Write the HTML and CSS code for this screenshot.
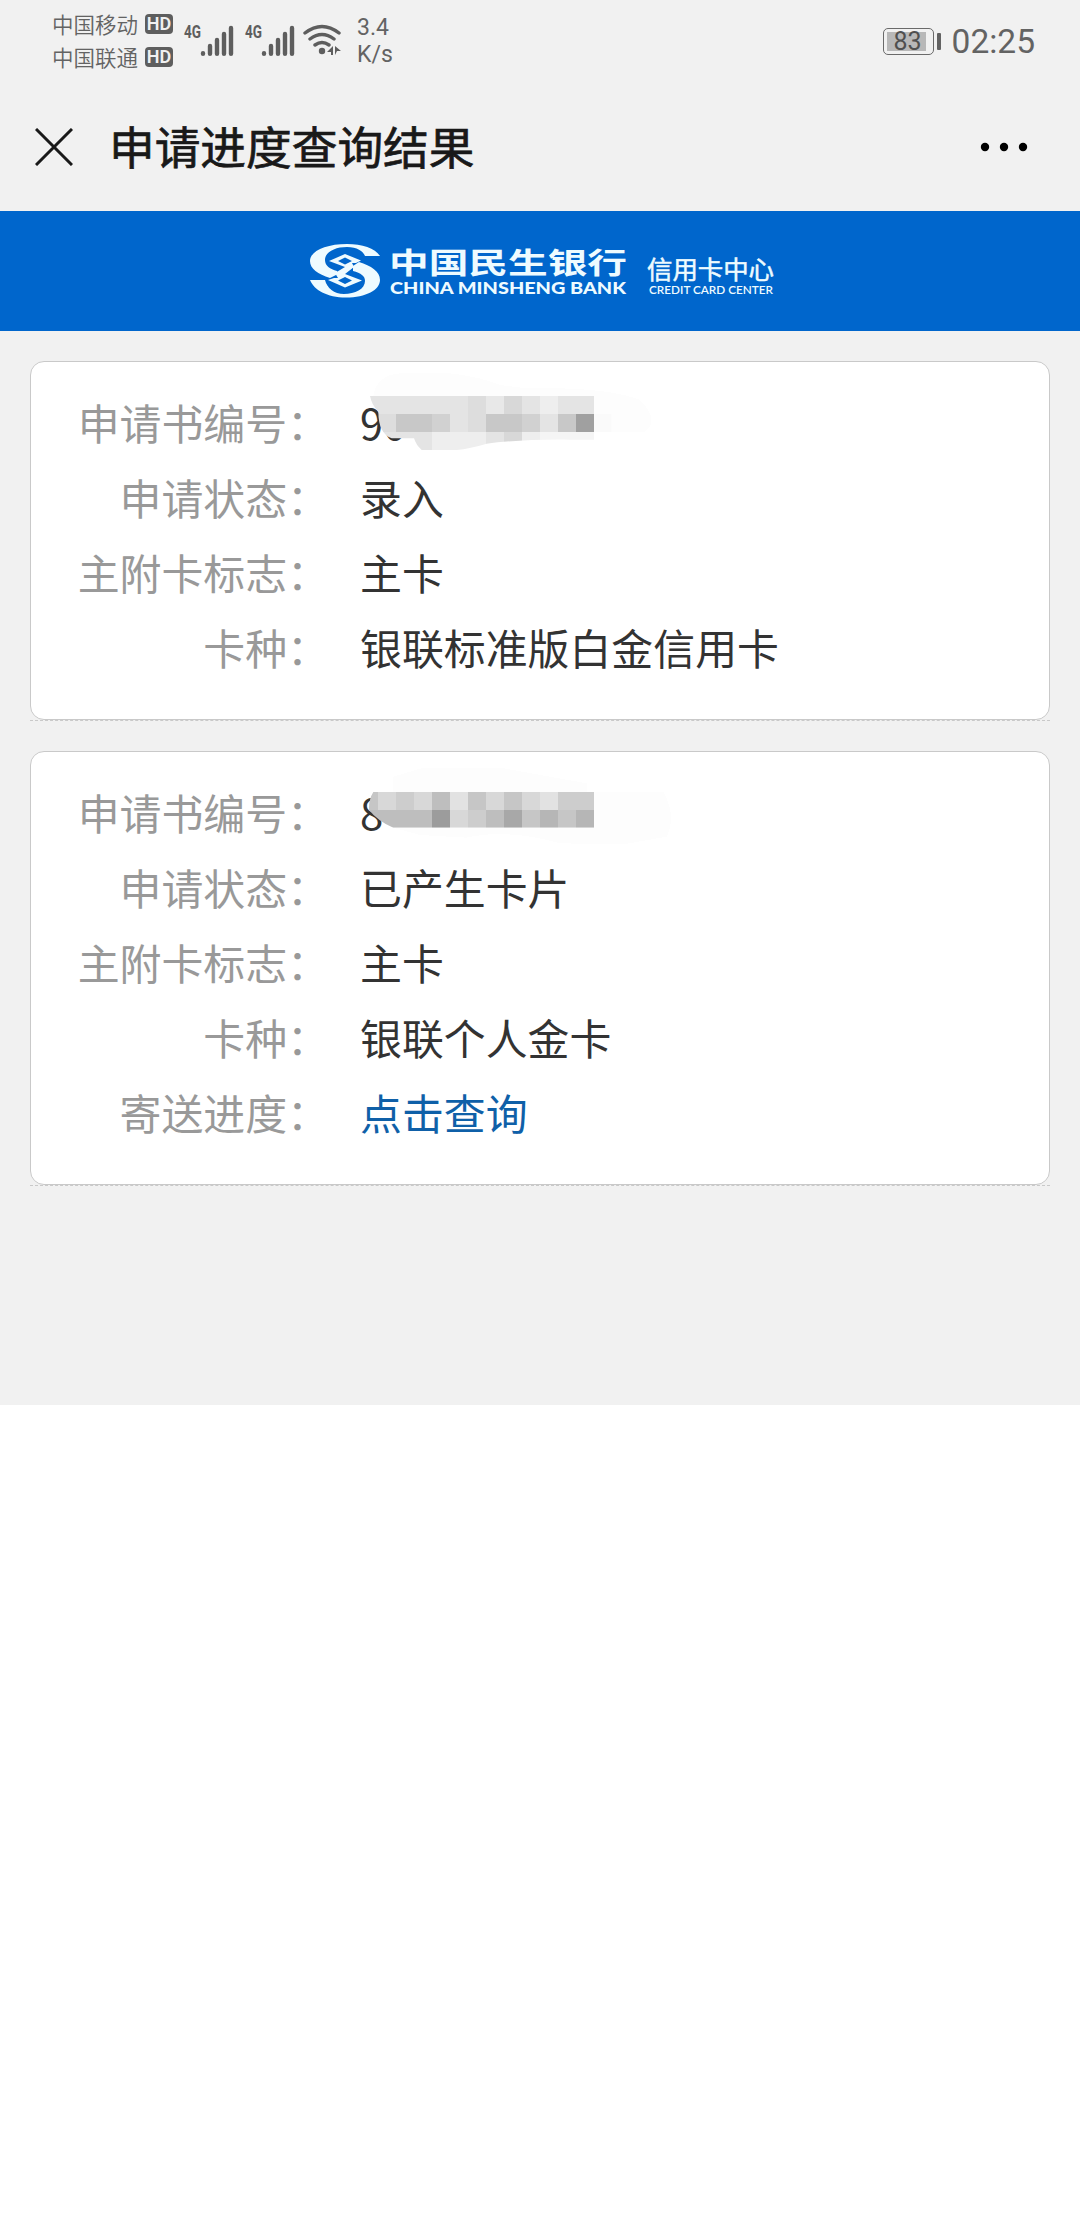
FILE: index.html
```html
<!DOCTYPE html>
<html lang="zh-CN">
<head>
    <meta charset="UTF-8">
    <meta name="viewport" content="width=device-width, initial-scale=1.0">
    <title>申请进度查询结果</title>
    <link rel="stylesheet" href="styles.css">
</head>
<body>
    <div class="status-bar">
        <div class="carriers">
            <div class="carrier">中国移动 <span class="hd">HD</span></div>
            <div class="carrier">中国联通 <span class="hd">HD</span></div>
        </div>
        <svg class="signal" width="52" height="34" viewBox="0 0 52 34">
            <text x="1" y="15" textLength="17" lengthAdjust="spacingAndGlyphs">4G</text>
            <path d="M20 30.2v.6M27 23v7.8M34 17v13.8M41 11v19.8M48 5v25.8"/>
        </svg>
        <svg class="signal" width="52" height="34" viewBox="0 0 52 34">
            <text x="1" y="15" textLength="17" lengthAdjust="spacingAndGlyphs">4G</text>
            <path d="M20 30.2v.6M27 23v7.8M34 17v13.8M41 11v19.8M48 5v25.8"/>
        </svg>
        <svg class="wifi" width="38" height="34" viewBox="0 0 38 34">
            <path class="arc" d="M2 10Q19 -3 36 10M7 16Q19 7 31 16M12 22Q19 17 26 22"/>
            <circle cx="19" cy="28" r="3.2"/>
            <path d="M30 23v9h-2v-3h-4zM32 32v-9l6 5h-4z"/>
        </svg>
        <div class="speed">3.4<br>K/s</div>
        <div class="battery"><div class="level">83</div></div>
        <div class="battery-cap"></div>
        <div class="clock">02:25</div>
    </div>

    <div class="title-bar">
        <svg class="close" width="38" height="38" viewBox="0 0 38 38">
            <path d="M1 1L37 37M37 1L1 37"/>
        </svg>
        <h1>申请进度查询结果</h1>
        <svg class="more" width="48" height="10" viewBox="0 0 48 10">
            <circle cx="5" cy="5" r="4.2"/>
            <circle cx="24" cy="5" r="4.2"/>
            <circle cx="43" cy="5" r="4.2"/>
        </svg>
    </div>

    <div class="banner">
        <svg width="470" height="60" viewBox="0 0 470 60">
            <path d="M70 16C65 8 52 4 37 4C16 4 0 11 0 21C0 29 8 34 20 38L28 34L27 31C20 29 15 26 15 20C15 12 25 7 37 7C47 7 53 11 55 16Z"/>
            <path d="M0 40C4 50 17 57.500 36 57.500C56 57.500 70 50 70 40C70 31 61 26 49 22L43 26L43 31C51 33 55 36 55 41C55 49 45 54 34 54C24 54 17 48 15 40Z"/>
            <path fill-rule="evenodd" d="M19 21L35 14L51 20.500L46 23L42 23L44 27L35 34L52 40.500L35 47.500L18 40L24 38L28 38L25 33L35 27ZM28 21L35 24.500L42 21L35 17.500ZM28 40.500L35 44L42 40.500L35 37Z"/>
            <text class="zh-name" x="79" y="33.500" textLength="238" lengthAdjust="spacingAndGlyphs">中国民生银行</text>
            <text class="en-name" x="80" y="54" textLength="236" lengthAdjust="spacingAndGlyphs">CHINA MINSHENG BANK</text>
            <text class="zh-sub" x="337" y="38.500" textLength="127" lengthAdjust="spacingAndGlyphs">信用卡中心</text>
            <text class="en-sub" x="339" y="54" textLength="124" lengthAdjust="spacingAndGlyphs">CREDIT CARD CENTER</text>
        </svg>
    </div>

    <div class="results">
        <div class="result">
            <div class="card">
                <div class="row">
                    <span class="label">申请书编号：</span>
                    <span class="value masked">90
                        <svg class="mosaic first" width="340" height="100" viewBox="0 0 1020 300">
                            <clipPath id="smear1">
                                <path d="M90 78H815V209H690C600 207 500 213 440 221Q390 236 350 240H245Q228 225 222 205H155Q115 190 115 125Q95 105 90 78Z"/>
                            </clipPath>
                            <path fill="#fdfdfd" d="M100 78Q110 15 180 10H330Q420 20 480 45L560 55Q800 50 900 90Q960 150 915 185H762V78Z"/>
                            <g clip-path="url(#smear1)">
                                <path fill="#e4e4e4" d="M60 78h324v54H60zM546 78h54v54h-54zM654 78h108v54H654zM330 132h54v54h-54zM600 132h54v54h-54zM60 186h216v54H60zM438 186h54v54h-54z"/>
                                <path fill="#dddddd" d="M384 78h54v108h-54zM60 132h108v54H60z"/>
                                <path fill="#e8e8e8" d="M438 78h54v54h-54z"/>
                                <path fill="#d8d8d8" d="M492 78h54v54h-54zM492 186h54v54h-54z"/>
                                <path fill="#eeeeee" d="M600 78h54v54h-54zM276 186h162v54H276zM546 186h54v54h-54z"/>
                                <path fill="#c8c8c8" d="M168 132h108v54H168zM438 132h108v54H438zM654 132h54v54h-54z"/>
                                <path fill="#d1d1d1" d="M276 132h54v54h-54zM546 132h54v54h-54z"/>
                                <path fill="#a0a0a0" d="M708 132h54v54h-54z"/>
                                <path fill="#f5f5f5" d="M600 186h162v54H600z"/>
                                <path fill="#fafafa" d="M762 132h53v54h-53z"/>
                            </g>
                        </svg>
                    </span>
                </div>
                <div class="row">
                    <span class="label">申请状态：</span>
                    <span class="value">录入</span>
                </div>
                <div class="row">
                    <span class="label">主附卡标志：</span>
                    <span class="value">主卡</span>
                </div>
                <div class="row">
                    <span class="label">卡种：</span>
                    <span class="value">银联标准版白金信用卡</span>
                </div>
            </div>
        </div>

        <div class="result">
            <div class="card">
                <div class="row">
                    <span class="label">申请书编号：</span>
                    <span class="value masked">8
                        <svg class="mosaic second" width="340" height="100" viewBox="0 0 1020 300">
                            <clipPath id="smear2">
                                <path d="M100 81H762V188H160Q115 170 87 135Q85 105 100 81Z"/>
                            </clipPath>
                            <path fill="#fdfdfd" d="M160 81V35L250 8H480L740 55V81H970Q1010 150 980 215L850 238L660 235Q500 190 380 218L240 210L160 188H762V81Z"/>
                            <g clip-path="url(#smear2)">
                                <path fill="#c6c6c6" d="M60 81h54v54H60zM384 81h54v54h-54zM492 81h54v54h-54zM546 135h54v54h-54zM654 135h54v54h-54z"/>
                                <path fill="#d8d8d8" d="M114 81h54v54h-54zM222 81h54v54h-54zM438 81h54v54h-54zM546 81h54v54h-54zM330 135h54v54h-54z"/>
                                <path fill="#cdcdcd" d="M168 81h54v54h-54zM654 81h108v54H654zM384 135h54v54h-54z"/>
                                <path fill="#e2e2e2" d="M330 81h54v54h-54zM600 81h54v54h-54z"/>
                                <path fill="#bebebe" d="M276 81h54v54h-54zM60 135h216v54H60zM438 135h54v54h-54z"/>
                                <path fill="#9c9c9c" d="M276 135h54v54h-54z"/>
                                <path fill="#a8a8a8" d="M492 135h54v54h-54z"/>
                                <path fill="#b6b6b6" d="M600 135h54v54h-54zM708 135h54v54h-54z"/>
                            </g>
                        </svg>
                    </span>
                </div>
                <div class="row">
                    <span class="label">申请状态：</span>
                    <span class="value">已产生卡片</span>
                </div>
                <div class="row">
                    <span class="label">主附卡标志：</span>
                    <span class="value">主卡</span>
                </div>
                <div class="row">
                    <span class="label">卡种：</span>
                    <span class="value">银联个人金卡</span>
                </div>
                <div class="row">
                    <span class="label">寄送进度：</span>
                    <a class="value link">点击查询</a>
                </div>
            </div>
        </div>
    </div>
</body>
</html>
```

FILE: styles.css
```css
* {
    box-sizing: border-box;
}
body {
    margin: 0;
    background-color: #fff;
    font-family: "Noto Sans CJK SC", sans-serif;
}
svg {
    display: block;
    flex: none;
}
.status-bar {
    display: flex;
    align-items: center;
    height: 82px;
    padding: 0 45px 0 52px;
    background-color: #f1f1f1;
    color: #636363;
    font-family: Roboto, "Noto Sans CJK SC", sans-serif;
}
.carriers {
    width: 131px;
    padding-bottom: 2px;
}
.carrier {
    display: flex;
    align-items: center;
    justify-content: space-between;
    width: 121px;
    height: 33px;
    font-size: 21.5px;
    font-weight: 350;
    white-space: nowrap;
}
.hd {
    width: 28px;
    height: 20px;
    border-radius: 4px;
    background-color: #5e5e5e;
    color: #f1f1f1;
    font-size: 18px;
    font-weight: 600;
    line-height: 20px;
    text-align: center;
}
.signal {
    margin: 0 9px 2px 0;
    overflow: visible;
}
.signal text {
    fill: #5e5e5e;
    font-size: 18px;
    font-weight: bold;
}
.signal path {
    stroke: #5e5e5e;
    stroke-width: 4.4;
    stroke-linecap: round;
}
.wifi {
    margin: 0 0 2px -2px;
    fill: #5e5e5e;
}
.wifi .arc {
    fill: none;
    stroke: #5e5e5e;
    stroke-width: 3.4;
    stroke-linecap: round;
}
.speed {
    margin-left: 16px;
    font-size: 23px;
    line-height: 27px;
}
.battery {
    width: 51px;
    height: 27px;
    margin-left: auto;
    padding: 3px;
    border: 1.5px solid #6a6a6a;
    border-radius: 5px;
}
.level {
    width: 39px;
    height: 19px;
    padding-left: 7px;
    background-color: #b8b8b8;
    color: #505050;
    font-size: 25px;
    line-height: 19px;
}
.battery-cap {
    width: 4px;
    height: 17px;
    margin: 0 11px 0 3px;
    border-radius: 1px;
    background-color: #636363;
}
.clock {
    font-size: 33.5px;
}
.title-bar {
    display: flex;
    align-items: center;
    height: 129px;
    padding: 0 52px 0 35px;
    background-color: #f1f1f1;
}
.title-bar h1 {
    flex: 1;
    margin: -3px 0 0 36px;
    color: #191919;
    font-size: 45.7px;
    font-weight: 400;
    line-height: 60px;
    -webkit-text-stroke: 0.7px #191919;
}
.close {
    stroke: #191919;
    stroke-width: 3;
}
.banner {
    height: 120px;
    padding: 20px 0 0 310px;
    background-color: #0066cc;
}
.banner svg {
    fill: #eefbff;
    margin-top: 9px;
}
.zh-name {
    font-size: 29px;
    font-weight: 700;
}
.en-name {
    font-family: Lato, sans-serif;
    font-size: 16.5px;
    font-weight: 900;
}
.zh-sub {
    font-size: 24.5px;
    font-weight: 400;
    stroke: #eefbff;
    stroke-width: 0.5px;
}
.en-sub {
    font-family: Lato, sans-serif;
    font-size: 11.5px;
    font-weight: 600;
}
.results {
    height: 1074px;
    padding: 30px 30px 0;
    background-color: #f1f1f1;
}
.result {
    margin-bottom: 30px;
    border-bottom: 1px dashed #c9c9c9;
}
.card {
    padding: 24px 0 33px;
    border: 1px solid #c9c9c9;
    border-radius: 14px;
    background-color: #fff;
}
.row {
    display: flex;
    height: 75px;
    font-size: 41.9px;
    line-height: 72px;
}
.label {
    width: 298px;
    color: #999;
    text-align: right;
}
.value {
    margin-left: 31px;
    color: #333;
}
.masked {
    position: relative;
}
/* blurred-out application number */
.mosaic {
    position: absolute;
    left: -20px;
    shape-rendering: crispEdges;
}
.mosaic.first {
    top: -16px;
}
.mosaic.second {
    top: -11px;
}
.link {
    color: #0f60a8;
}
```
